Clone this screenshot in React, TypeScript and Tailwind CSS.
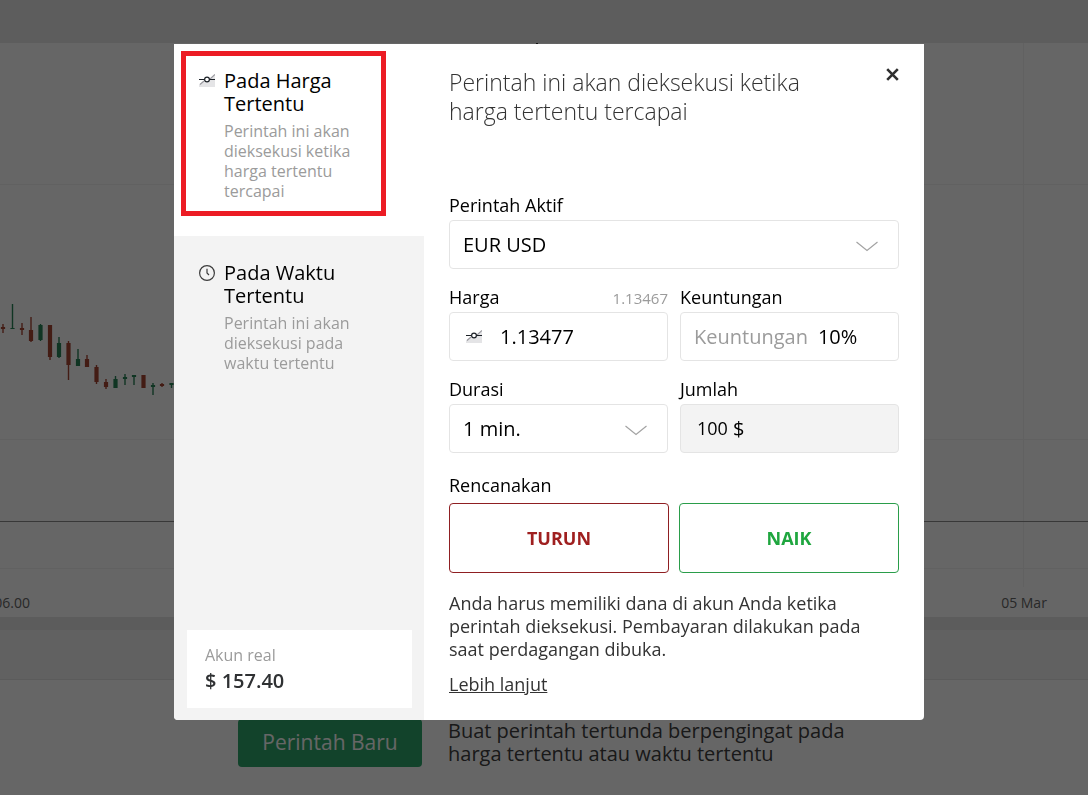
import { useState } from "react";
import type { ReactNode } from "react";

type Candle = { x: number; high: number; low: number; top: number; bottom: number; up: boolean };

// Heights are measured from the top edge of the chart.
const candles: Candle[] = [
  { x: 3, high: 281, low: 290, top: 284, bottom: 286, up: false },
  { x: 12.5, high: 261, low: 286, top: 285, bottom: 286, up: true },
  { x: 22, high: 280, low: 292, top: 285, bottom: 287, up: false },
  { x: 31, high: 274, low: 299, top: 287, bottom: 298, up: false },
  { x: 40.5, high: 281, low: 298, top: 282, bottom: 297, up: true },
  { x: 50, high: 282, low: 317, top: 282, bottom: 314, up: false },
  { x: 59, high: 294, low: 315, top: 300, bottom: 314, up: true },
  { x: 68.5, high: 298, low: 337, top: 300, bottom: 322, up: false },
  { x: 78, high: 306, low: 323, top: 316, bottom: 323, up: true },
  { x: 87, high: 312, low: 324, top: 316, bottom: 324, up: false },
  { x: 96.5, high: 322, low: 341, top: 324, bottom: 339, up: false },
  { x: 106, high: 336, low: 346, top: 339, bottom: 344, up: false },
  { x: 115.5, high: 333, low: 345, top: 336, bottom: 345, up: true },
  { x: 125, high: 331, low: 342, top: 334, bottom: 336, up: true },
  { x: 134, high: 332, low: 342, top: 332, bottom: 334, up: true },
  { x: 143.5, high: 332, low: 345, top: 332, bottom: 345, up: false },
  { x: 153, high: 340, low: 352, top: 342, bottom: 344, up: true },
  { x: 162, high: 340, low: 344, top: 341, bottom: 343, up: false },
  { x: 171.5, high: 340, low: 345, top: 340, bottom: 342, up: true },
];

function Chart() {
  return (
    <svg className="block h-[574px] w-full bg-white" aria-hidden="true">
      <rect x="536" y="0" width="2" height="1" fill="#333" />
      <g fill="#f3f3f3">
        <rect x="0" y="141" width="100%" height="1" />
        <rect x="0" y="396" width="100%" height="1" />
        <rect x="0" y="525" width="100%" height="1" />
        <rect x="1023" y="0" width="1" height="544" />
      </g>
      <rect x="0" y="478" width="100%" height="1" fill="#8c8c8c" />
      {candles.map((c) => (
        <g key={c.x} fill={c.up ? "#2a8559" : "#a84734"}>
          <rect x={c.x - 0.7} y={c.high} width="1.4" height={c.low - c.high} />
          <rect x={c.x - 2.1} y={c.top} width="4.2" height={c.bottom - c.top} />
        </g>
      ))}
      <g fill="#666" fontSize="14">
        <text x="30" y="565" textAnchor="end">06.00</text>
        <text x="1024" y="565" textAnchor="middle">05 Mar</text>
      </g>
    </svg>
  );
}

function PriceIcon() {
  return (
    <svg width="16" height="14" viewBox="0 0 16 14" fill="none" className="shrink-0" aria-hidden="true">
      <path d="M0 13V10.500L4 8L8 8.500L11 6L16 1V13Z" fill="#e4e4e6" />
      <path d="M1 10.500L5 7M10.500 5.500L16 0.500" stroke="#9a9aa0" strokeWidth="1.200" />
      <path d="M0 5.500H5.500M10.500 5.500H16" stroke="#1c2127" strokeWidth="1.200" />
      <circle cx="8" cy="5.500" r="2.400" fill="#fff" stroke="#1c2127" strokeWidth="1.200" />
    </svg>
  );
}

function ClockIcon() {
  return (
    <svg width="16" height="16" viewBox="0 0 16 16" fill="none" stroke="#3c3c3c" strokeWidth="1.200" className="shrink-0" aria-hidden="true">
      <circle cx="8" cy="8" r="7.400" />
      <path d="M8 3.800V8L10 10" />
    </svg>
  );
}

function Chevron() {
  return (
    <svg
      width="22"
      height="11"
      viewBox="0 0 22 11"
      fill="none"
      stroke="#a3a3a3"
      strokeWidth="1.200"
      className="pointer-events-none absolute top-[21px] right-[21px]"
      aria-hidden="true"
    >
      <path d="M0.500 1L11 9.500L21.500 1" />
    </svg>
  );
}

function TabButton(props: { icon: ReactNode; title: string; text: string; active?: boolean }) {
  return (
    <button
      type="button"
      role="tab"
      aria-selected={!!props.active}
      className={
        props.active
          ? "flex h-48 w-full items-start gap-[9px] bg-white pt-[25px] pr-[60px] pl-[25px] text-left"
          : "flex h-48 w-full items-start gap-[9px] pt-[25px] pr-[60px] pl-[25px] text-left"
      }
    >
      <span className="flex h-[23px] items-center">{props.icon}</span>
      <span className="flex flex-col gap-[6px]">
        <span className="text-[20px] leading-[23px] text-black">{props.title}</span>
        <span className="text-[16px] leading-[20px] text-[#9b9b9b]">{props.text}</span>
      </span>
    </button>
  );
}

const label = "mb-[2px] text-[18px] leading-[26px] text-black";
const box = "h-[49px] w-full rounded border border-[#e4e4e4] bg-white text-[20px] text-black";

export default function App() {
  const [price, setPrice] = useState("1.13477");
  const [profit, setProfit] = useState("10%");
  const [amount, setAmount] = useState("100");

  return (
    <div className="min-h-screen bg-white font-['Open_Sans',sans-serif]">
      <div className="h-[43px] bg-[#e8e8e8]" />
      <Chart />
      <div className="h-[13px] bg-[#e6e6e6]" />
      <div className="h-[50px] border-b border-[#e4e4e4] bg-[#f3f3f3]" />
      <div className="flex items-start gap-[26px] pt-[39px] pl-[238px]">
        <button type="button" className="h-12 w-[184px] shrink-0 rounded bg-[#2da86c] text-[21px] text-white">
          Perintah Baru
        </button>
        <p className="w-[400px] text-[20px] leading-[23px] text-[#404040]">
          Buat perintah tertunda berpengingat pada harga tertentu atau waktu tertentu
        </p>
      </div>

      <div className="fixed inset-0 flex items-start justify-center overflow-auto bg-black/60 pt-11 pl-[10px]">
        <div role="dialog" aria-modal="true" className="relative flex w-full max-w-[750px] overflow-hidden rounded-b bg-white">
          <aside className="flex w-[250px] shrink-0 flex-col bg-[#f3f3f3]">
            <div role="tablist">
              <TabButton
                active
                icon={<PriceIcon />}
                title="Pada Harga Tertentu"
                text="Perintah ini akan dieksekusi ketika harga tertentu tercapai"
              />
              <TabButton
                icon={<ClockIcon />}
                title="Pada Waktu Tertentu"
                text="Perintah ini akan dieksekusi pada waktu tertentu"
              />
            </div>
            <div className="mx-3 mt-auto mb-3 ml-[13px] bg-white px-[18px] py-[13px]">
              <div className="text-[16px] leading-6 text-[#9b9b9b]">Akun real</div>
              <div className="text-[20px] leading-7 font-semibold text-[#2f3133]">$ 157.40</div>
            </div>
          </aside>

          <form className="flex min-w-0 flex-1 flex-col px-[25px] pt-6 pb-6" onSubmit={(e) => e.preventDefault()}>
            <div className="flex h-[124px] items-start justify-between">
              <h2 className="w-[380px] text-[23px] leading-[29px] font-light text-[#333]">
                Perintah ini akan dieksekusi ketika harga tertentu tercapai
              </h2>
              <button type="button" aria-label="Tutup" className="flex size-[13px]">
                <svg width="13" height="13" viewBox="0 0 13 13" stroke="#2f2f2f" strokeWidth="2.600" aria-hidden="true">
                  <path d="M1.200 1.200L11.800 11.800M11.800 1.200L1.200 11.800" />
                </svg>
              </button>
            </div>

            <div className="flex flex-col gap-[15px]">
              <div className="flex flex-col">
                <label htmlFor="asset" className={label}>Perintah Aktif</label>
                <div className="relative">
                  <select id="asset" className={`${box} appearance-none px-[13px]`}>
                    <option>EUR USD</option>
                  </select>
                  <Chevron />
                </div>
              </div>

              <div className="grid grid-cols-2 gap-x-3 gap-y-[15px]">
                <div>
                  <div className="flex items-center justify-between">
                    <label htmlFor="price" className={label}>Harga</label>
                    <span className="text-[15px] leading-7 text-[#9b9b9b]">1.13467</span>
                  </div>
                  <div className={`${box} flex items-center gap-[18px] px-4`}>
                    <PriceIcon />
                    <input
                      id="price"
                      value={price}
                      onChange={(e) => setPrice(e.target.value)}
                      className="min-w-0 flex-1 bg-transparent outline-none"
                    />
                  </div>
                </div>
                <div>
                  <label htmlFor="profit" className={`${label} block`}>Keuntungan</label>
                  <div className={`${box} flex items-center gap-[10px] px-[13px]`}>
                    <span className="text-[#9b9b9b]">Keuntungan</span>
                    <input
                      id="profit"
                      value={profit}
                      onChange={(e) => setProfit(e.target.value)}
                      className="min-w-0 flex-1 bg-transparent outline-none"
                    />
                  </div>
                </div>
                <div>
                  <label htmlFor="duration" className={`${label} block`}>Durasi</label>
                  <div className="relative">
                    <select id="duration" className={`${box} appearance-none px-[13px]`}>
                      <option>1 min.</option>
                    </select>
                    <Chevron />
                  </div>
                </div>
                <div>
                  <label htmlFor="amount" className={`${label} block`}>Jumlah</label>
                  <div className="flex h-[49px] items-center gap-1 rounded border border-[#e4e4e4] bg-[#f3f3f3] px-4 text-black">
                    <input
                      id="amount"
                      value={amount}
                      onChange={(e) => setAmount(e.target.value)}
                      className="w-8 bg-transparent text-[18px] outline-none"
                    />
                    <span className="text-[20px]">$</span>
                  </div>
                </div>
              </div>
            </div>

            <div className="mt-[19px] flex flex-col gap-[3px]">
              <span className={label}>Rencanakan</span>
              <div className="grid grid-cols-2 gap-[10px]">
                <button type="submit" className="h-[70px] rounded border border-[#8f1f22] text-[18px] font-bold text-[#9f1f1f]">
                  TURUN
                </button>
                <button type="submit" className="h-[70px] rounded border border-[#2a9d4a] text-[18px] font-bold text-[#1fa63f]">
                  NAIK
                </button>
              </div>
            </div>

            <p className="mt-[19px] text-[18px] leading-[23px] text-[#333]">
              Anda harus memiliki dana di akun Anda ketika perintah dieksekusi. Pembayaran dilakukan pada saat perdagangan
              dibuka.
            </p>
            <a href="#" className="mt-3 self-start text-[18px] leading-[23px] text-[#333] underline">
              Lebih lanjut
            </a>
          </form>

          <div className="pointer-events-none absolute top-[7px] left-[7px] h-[165px] w-[205px] border-5 border-[#ec1c24]" />
        </div>
      </div>
    </div>
  );
}
